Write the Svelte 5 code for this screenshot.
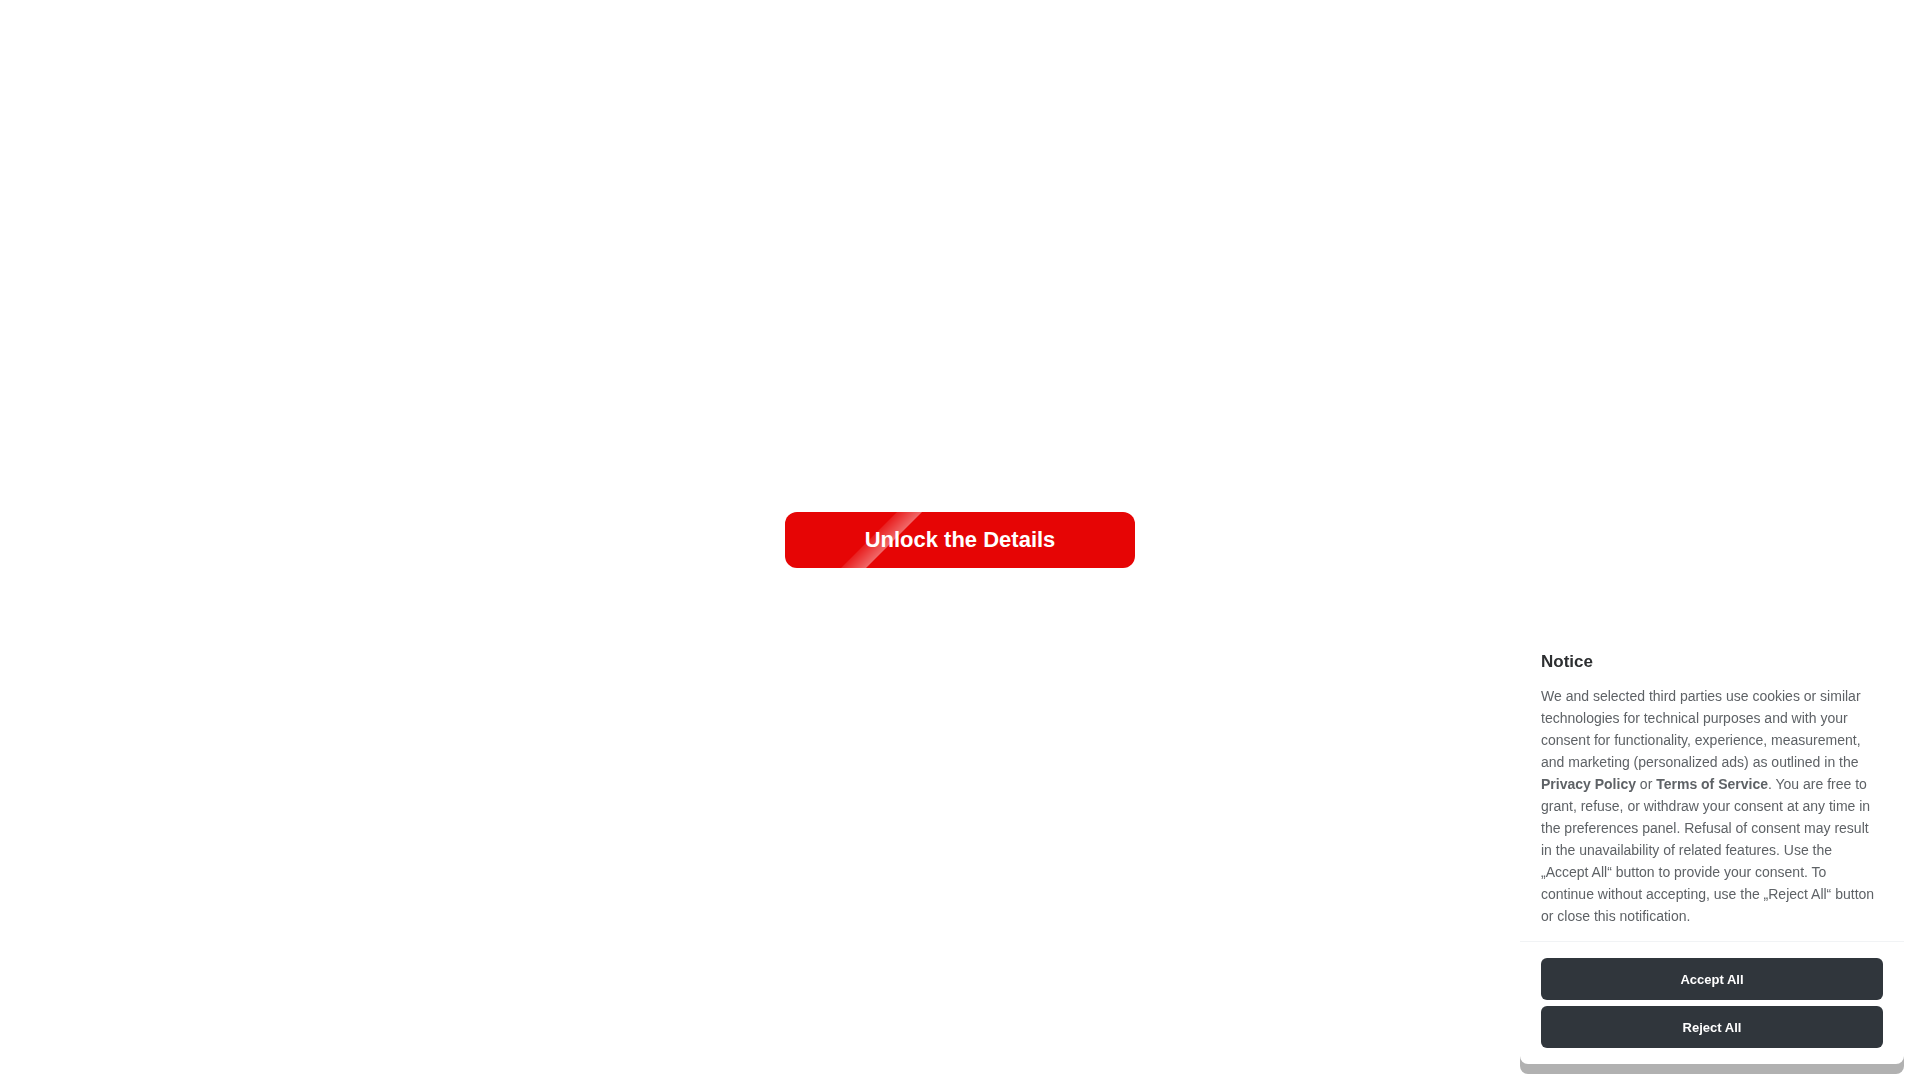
<script lang="ts">
    let noticeOpen = true;

    function closeNotice() {
        noticeOpen = false;
    }
</script>

<main>
    <button class="unlock" type="button">Unlock the Details</button>
</main>

{#if noticeOpen}
    <div class="notice" role="dialog" aria-labelledby="notice-title">
        <div class="body">
            <h2 id="notice-title">Notice</h2>
            <p>
                We and selected third parties use cookies or similar technologies for technical purposes and with your
                consent for functionality, experience, measurement, and marketing (personalized ads) as outlined in the
                <a href="/privacy">Privacy Policy</a> or <a href="/terms">Terms of Service</a>. You are free to grant,
                refuse, or withdraw your consent at any time in the preferences panel. Refusal of consent may result in
                the unavailability of related features. Use the „Accept All“ button to provide your consent. To continue
                without accepting, use the „Reject All“ button or close this notification.
            </p>
        </div>
        <div class="actions">
            <button type="button" on:click={closeNotice}>Accept All</button>
            <button type="button" on:click={closeNotice}>Reject All</button>
        </div>
    </div>
{/if}

<style>
    :global(body){
        margin: 0;
        background-color: #fff;
        font-family: "Liberation Sans", Arial, sans-serif;
    }
    main{
        min-height: 100vh;
        display: flex;
        align-items: center;
        justify-content: center;
    }
    button{
        border: none;
        font-family: inherit;
        font-weight: 700;
        cursor: pointer;
    }
    .unlock{
        position: relative;
        overflow: hidden;
        width: 350px;
        max-width: 90%;
        padding: 15px 20px;
        border-radius: 12px;
        background-color: #e60505;
        color: #fff;
        font-size: 22px;
        line-height: 26px;
    }
    /* shine stripe */
    .unlock::after{
        content: "";
        position: absolute;
        top: 0;
        bottom: 0;
        left: 24%;
        width: 25px;
        background: linear-gradient(to right, rgba(255, 255, 255, 0.1), rgba(255, 255, 255, 0.4));
        transform: skewX(-45deg);
    }
    .notice{
        position: fixed;
        right: 16px;
        bottom: 16px;
        width: 384px;
        max-width: calc(100% - 32px);
        border-radius: 8px;
        background-color: #fff;
        box-shadow: 0 10px 0 #b1b1b1;
    }
    .body{
        padding: 20px 21px 14px;
    }
    h2{
        margin: 0 0 11px;
        font-size: 17px;
        line-height: 24px;
        color: #2d2f31;
    }
    p{
        margin: 0;
        font-size: 14px;
        line-height: 22px;
        color: #5e6266;
    }
    a{
        color: inherit;
        font-weight: 700;
        text-decoration: none;
    }
    .actions{
        display: flex;
        flex-direction: column;
        gap: 6px;
        padding: 16px 21px;
        border-top: 1px solid #f1f3f5;
    }
    .actions button{
        padding: 14px 16px 12px;
        border-radius: 6px;
        background-color: #30363c;
        color: #fff;
        font-size: 13px;
        line-height: 16px;
    }
</style>
